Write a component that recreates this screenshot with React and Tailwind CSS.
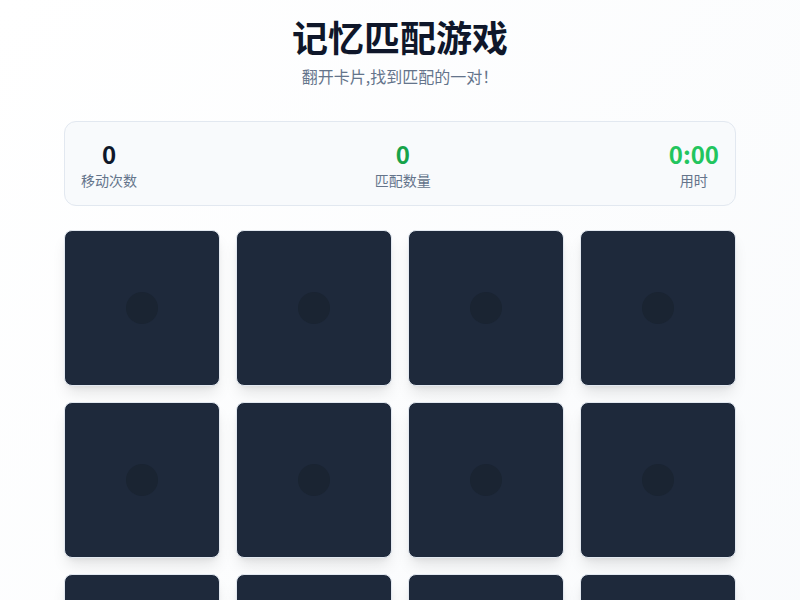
import React from "react";

export default function App() {
  const cards = Array.from({ length: 16 });
  return (
    <div
      className="min-h-screen bg-linear-to-br from-white to-[#f8fafc] px-4 pt-4 pb-8"
      style={{ fontFamily: '"Noto Sans CJK SC", sans-serif' }}
    >
      <div className="mx-auto max-w-2xl">
        <h1 className="text-center text-4xl leading-10 font-bold text-[#0f172a]">记忆匹配游戏</h1>
        <p className="mt-2 text-center text-base leading-6 text-[#64748b]">翻开卡片,找到匹配的一对！</p>

        <div className="mt-[33px] flex items-center justify-between rounded-xl border border-[#e2e8f0] bg-[#f8fafc] px-4 pt-4 pb-[15px]">
          <div className="flex flex-col items-center">
            <div className="text-2xl leading-8 font-bold text-[#0f172a]">0</div>
            <div className="text-sm leading-5 text-[#64748b]">移动次数</div>
          </div>
          <div className="flex flex-col items-center">
            <div className="text-2xl leading-8 font-bold text-[#16a34a]">0</div>
            <div className="text-sm leading-5 text-[#64748b]">匹配数量</div>
          </div>
          <div className="flex flex-col items-center">
            <div className="text-2xl leading-8 font-bold text-[#22c55e]">0:00</div>
            <div className="text-sm leading-5 text-[#64748b]">用时</div>
          </div>
        </div>

        <div className="mt-6 grid grid-cols-4 gap-4">
          {cards.map((_, i) => (
            <div
              key={i}
              className="flex aspect-square items-center justify-center rounded-lg border border-[#e2e8f0] bg-[#1e293b] shadow-lg"
            >
              <div className="h-8 w-8 rounded-full bg-[#1a2432]" />
            </div>
          ))}
        </div>
      </div>
    </div>
  );
}
